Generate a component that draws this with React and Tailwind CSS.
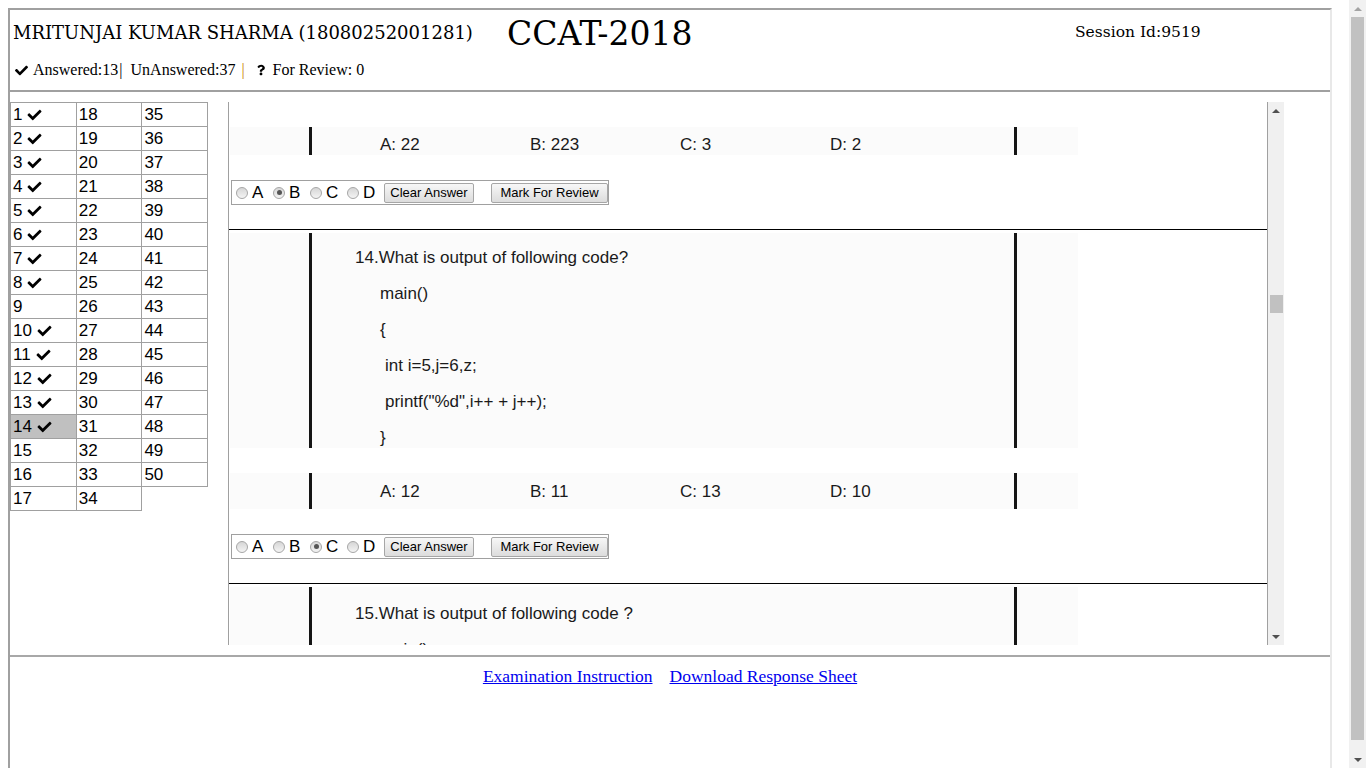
import React from "react";
import { FaCheck, FaQuestion } from "react-icons/fa";

const answered = new Set([1, 2, 3, 4, 5, 6, 7, 8, 10, 11, 12, 13, 14]);

function Cell({ n }) {
  if (n == null) return null;
  const hl = n === 14;
  return (
    <td
      className={
        "border border-[#a0a0a0] h-[24px] w-[66px] p-0 pl-[2px] align-middle text-[17px] leading-none text-black " +
        (hl ? "bg-[#c0c0c0]" : "")
      }
    >
      <span className="inline-flex items-center gap-[5px]">
        <span>{n}</span>
        {answered.has(n) && <FaCheck className="w-[15px] h-[14px]" />}
      </span>
    </td>
  );
}

function Radio({ checked }) {
  return (
    <span className="w-[12px] h-[12px] rounded-full border border-[#a6a6a6] bg-gradient-to-b from-[#d6d6d6] to-[#f4f4f4] flex items-center justify-center">
      {checked && <span className="w-[5px] h-[5px] rounded-full bg-[#555]" />}
    </span>
  );
}

function AnswerBox({ sel }) {
  return (
    <div className="shrink-0 ml-[2px] w-[378px] h-[25px] border border-[#a0a0a0] flex items-center pl-[4px]">
      {["A", "B", "C", "D"].map((l) => (
        <div key={l} className="w-[37px] flex items-center">
          <span className="mr-[4px]">
            <Radio checked={l === sel} />
          </span>
          <span className="text-[17px] leading-none text-black">{l}</span>
        </div>
      ))}
      <button className="w-[90px] h-[20px] border border-[#a6a6a6] rounded-[2px] bg-gradient-to-b from-[#f7f7f7] to-[#dcdcdc] text-[13px] leading-none text-black">
        Clear Answer
      </button>
      <button className="ml-[17px] w-[117px] h-[20px] border border-[#a6a6a6] rounded-[2px] bg-gradient-to-b from-[#f7f7f7] to-[#dcdcdc] text-[13px] leading-none text-black">
        Mark For Review
      </button>
    </div>
  );
}

function QImg({ hClass, children }) {
  return (
    <div className={"shrink-0 ml-px w-[848px] bg-[#fbfbfb] flex " + hClass}>
      <div className="w-[79px]" />
      <div className="w-[3px] bg-[#151515]" />
      <div className="w-[702px] overflow-hidden text-[17px] text-[#1a1a1a]">{children}</div>
      <div className="w-[3px] bg-[#151515]" />
    </div>
  );
}

function Options({ hClass, inner, opts }) {
  return (
    <QImg hClass={hClass}>
      <div className={"h-full flex items-center pl-[68px] " + inner}>
        {opts.map((o) => (
          <div key={o} className="w-[150px] leading-none">
            {o}
          </div>
        ))}
      </div>
    </QImg>
  );
}

function Line({ children, indent }) {
  return (
    <div className={"h-[36px] flex items-center leading-none whitespace-pre " + indent}>{children}</div>
  );
}

export default function App() {
  const rows = [];
  for (let i = 0; i < 17; i++) {
    rows.push([i + 1, i + 18, i + 35 <= 50 ? i + 35 : null]);
  }
  const serif = "font-['DejaVu_Serif',serif]";
  const tserif = "font-['Liberation_Serif',serif]";
  return (
    <div className="w-[1366px] h-[768px] flex overflow-hidden bg-white font-['Liberation_Sans',Arial,sans-serif]">
      <div className="w-[1349px] pt-[8px] pl-[8px]">
        <div className="w-[1324px] h-[760px] border-t-2 border-l-2 border-r-2 border-t-[#a0a0a0] border-l-[#a0a0a0] border-r-[#e8e8e8] flex flex-col">
          {/* header */}
          <div className="h-[80px] flex flex-col">
            <div className={"h-[46px] flex items-center text-black " + serif}>
              <div className="w-[497px] pl-[3px] text-[18px] leading-none">
                MRITUNJAI KUMAR SHARMA (18080252001281)
              </div>
              <div className="w-[568px] text-[33px] leading-none">CCAT-2018</div>
              <div className="text-[15.5px] leading-none">Session Id:9519</div>
            </div>
            <div className={"h-[28px] flex items-center text-[16px] leading-none text-black " + tserif}>
              <FaCheck className="ml-[4px] w-[15px] h-[13px]" />
              <span className="ml-[4px]">Answered:13</span>
              <span className="ml-[1px]">|</span>
              <span className="ml-[8px]">UnAnswered:37</span>
              <span className="ml-[6px] text-[#c98300]">|</span>
              <FaQuestion className="ml-[12px] w-[8px] h-[12px]" />
              <span className="ml-[8px]">For Review: 0</span>
            </div>
          </div>
          <div className="h-[2px] bg-[#a0a0a0]" />
          {/* body */}
          <div className="flex pt-[10px]">
            <div className="w-[198px]">
              <table className="border-collapse">
                <tbody>
                  {rows.map((r, i) => (
                    <tr key={i}>
                      <Cell n={r[0]} />
                      <Cell n={r[1]} />
                      {r[2] != null && <Cell n={r[2]} />}
                    </tr>
                  ))}
                </tbody>
              </table>
            </div>
            <div className="ml-[20px] w-[1056px] h-[543px] border-l border-[#a0a0a0] flex">
              <div className="w-[1038px] overflow-hidden flex flex-col">
                <div className="h-[25px] shrink-0" />
                <Options hClass="h-[28px]" inner="pt-[6px]" opts={["A: 22", "B: 223", "C: 3", "D: 2"]} />
                <div className="h-[25px] shrink-0" />
                <AnswerBox sel="B" />
                <div className="h-[24px] shrink-0" />
                <div className="h-px bg-black shrink-0" />
                <div className="h-[3px] shrink-0" />
                <QImg hClass="h-[215px]">
                  <div className="pt-[6px] pl-[43px]">
                    <Line indent="">14.What is output of following code?</Line>
                    <Line indent="pl-[25px]">main()</Line>
                    <Line indent="pl-[25px]">{"{"}</Line>
                    <Line indent="pl-[30px]">int i=5,j=6,z;</Line>
                    <Line indent="pl-[30px]">printf("%d",i++ + j++);</Line>
                    <Line indent="pl-[25px]">{"}"}</Line>
                  </div>
                </QImg>
                <div className="h-[25px] shrink-0" />
                <Options hClass="h-[36px]" inner="" opts={["A: 12", "B: 11", "C: 13", "D: 10"]} />
                <div className="h-[25px] shrink-0" />
                <AnswerBox sel="C" />
                <div className="h-[24px] shrink-0" />
                <div className="h-px bg-black shrink-0" />
                <div className="h-[3px] shrink-0" />
                <QImg hClass="h-[215px]">
                  <div className="pt-[8px] pl-[43px]">
                    <Line indent="">15.What is output of following code ?</Line>
                    <Line indent="pl-[25px]">main()</Line>
                  </div>
                </QImg>
              </div>
              <div className="w-[17px] border-l border-[#a0a0a0] bg-[#f0f0f0] flex flex-col items-center">
                <div className="h-[17px] flex items-center justify-center">
                  <div className="w-0 h-0 border-l-[4px] border-r-[4px] border-b-[4px] border-l-transparent border-r-transparent border-b-[#505050]" />
                </div>
                <div className="h-[176px]" />
                <div className="w-[13px] h-[18px] bg-[#c1c1c1]" />
                <div className="flex-1" />
                <div className="h-[17px] flex items-center justify-center">
                  <div className="w-0 h-0 border-l-[4px] border-r-[4px] border-t-[4px] border-l-transparent border-r-transparent border-t-[#505050]" />
                </div>
              </div>
            </div>
          </div>
          <div className="h-[10px]" />
          <div className="h-[2px] bg-[#a8a8a8]" />
          <div className={"pt-[11px] flex justify-center gap-[17px] text-[17.5px] leading-none text-[#0000ee] " + tserif}>
            <a href="#" className="underline">Examination Instruction</a>
            <a href="#" className="underline">Download Response Sheet</a>
          </div>
        </div>
      </div>
      <div className="w-[17px] bg-[#f1f1f1] flex flex-col items-center">
        <div className="h-[17px] flex items-center justify-center">
          <div className="w-0 h-0 border-l-[4px] border-r-[4px] border-b-[4px] border-l-transparent border-r-transparent border-b-[#a3a3a3]" />
        </div>
        <div className="w-[13px] h-[723px] bg-[#c1c1c1]" />
        <div className="flex-1" />
        <div className="h-[17px] flex items-center justify-center">
          <div className="w-0 h-0 border-l-[4px] border-r-[4px] border-t-[4px] border-l-transparent border-r-transparent border-t-[#505050]" />
        </div>
      </div>
    </div>
  );
}
